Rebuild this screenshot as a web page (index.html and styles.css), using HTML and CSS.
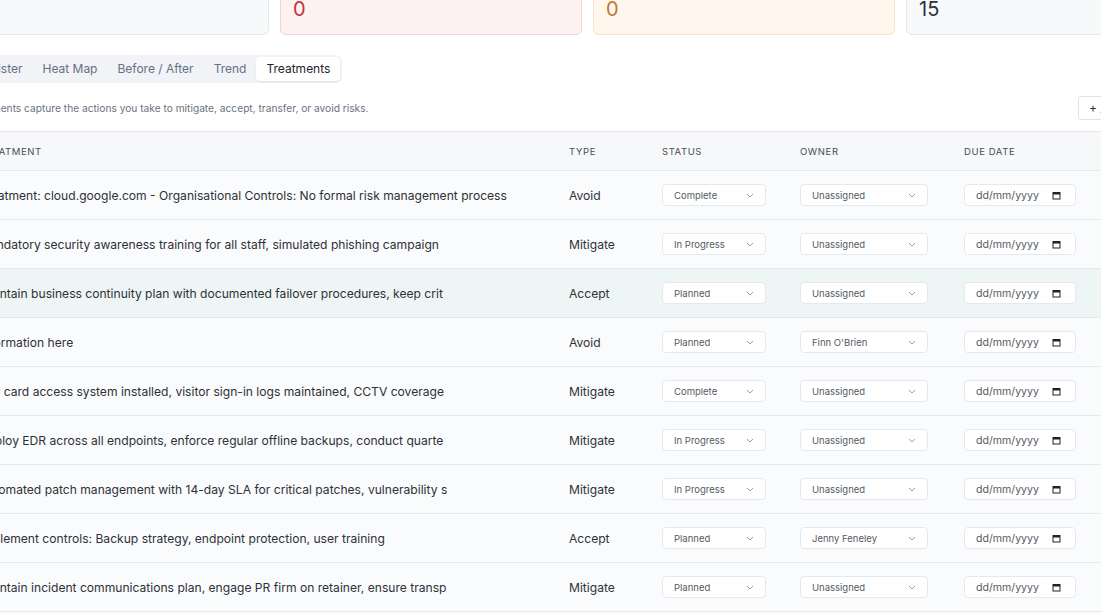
FILE: index.html
```html
<!DOCTYPE html>
<html>

	<head>
		<meta charset="UTF-8">
		<title>Risk Treatments</title>
		<link rel="stylesheet" href="styles.css">
	</head>

	<body>
		<div class="page">
			<div class="cards">
				<div class="card">
					<div class="card-label">Total Risks</div>
					<div class="card-value">0</div>
				</div>
				<div class="card card-red">
					<div class="card-label">Critical</div>
					<div class="card-value">0</div>
				</div>
				<div class="card card-orange">
					<div class="card-label">High</div>
					<div class="card-value">0</div>
				</div>
				<div class="card">
					<div class="card-label">Treatments</div>
					<div class="card-value">15</div>
				</div>
			</div>

			<div class="tabs">
				<div class="tab">Register</div>
				<div class="tab">Heat Map</div>
				<div class="tab">Before / After</div>
				<div class="tab">Trend</div>
				<div class="tab active">Treatments</div>
			</div>

			<div class="toolbar">
				<p class="hint">Treatments capture the actions you take to mitigate, accept, transfer, or avoid risks.</p>
				<button class="add-btn">+ Add Treatment</button>
			</div>

			<table class="grid">
				<thead>
					<tr>
						<th class="c-treat">Treatment</th>
						<th class="c-type">Type</th>
						<th class="c-status">Status</th>
						<th class="c-owner">Owner</th>
						<th class="c-due">Due Date</th>
						<th class="c-act"></th>
					</tr>
				</thead>
				<tbody id="rows"></tbody>
			</table>
		</div>

		<script type="text/javascript">
			var data = [
				['Treatment: cloud.google.com - Organisational Controls: No formal risk management process', 'Avoid', 'Complete', 'Unassigned'],
				['Mandatory security awareness training for all staff, simulated phishing campaign', 'Mitigate', 'In Progress', 'Unassigned'],
				['Maintain business continuity plan with documented failover procedures, keep crit', 'Accept', 'Planned', 'Unassigned'],
				['Information here', 'Avoid', 'Planned', 'Finn O\'Brien'],
				['Key card access system installed, visitor sign-in logs maintained, CCTV coverage', 'Mitigate', 'Complete', 'Unassigned'],
				['Deploy EDR across all endpoints, enforce regular offline backups, conduct quarte', 'Mitigate', 'In Progress', 'Unassigned'],
				['Automated patch management with 14-day SLA for critical patches, vulnerability s', 'Mitigate', 'In Progress', 'Unassigned'],
				['Implement controls: Backup strategy, endpoint protection, user training', 'Accept', 'Planned', 'Jenny Feneley'],
				['Maintain incident communications plan, engage PR firm on retainer, ensure transp', 'Mitigate', 'Planned', 'Unassigned'],
				['Review supplier contracts for security clauses', 'Transfer', 'Planned', 'Unassigned']
			];

			var chevron = '<svg class="chev" width="8" height="5" viewBox="0 0 8 5"><path d="M1 1l3 3 3-3" fill="none" stroke="#9aa0a6" stroke-width="1"/></svg>';
			var cal = '<svg class="cal" width="9" height="9" viewBox="0 0 9 9"><rect x="1" y="1.5" width="7" height="6.5" fill="none" stroke="#222" stroke-width="1"/><rect x="1" y="1.5" width="7" height="2" fill="#222"/></svg>';

			function init() {
				var tbody = document.getElementById('rows');
				var html = '';
				for(var i = 0; i < data.length; i++) {
					var r = data[i];
					html += '<tr' + (i === 2 ? ' class="hover"' : '') + '>' +
						'<td class="c-treat">' + r[0] + '</td>' +
						'<td class="c-type">' + r[1] + '</td>' +
						'<td><div class="sel sel-status"><span>' + r[2] + '</span>' + chevron + '</div></td>' +
						'<td><div class="sel sel-owner"><span>' + r[3] + '</span>' + chevron + '</div></td>' +
						'<td><div class="date"><span>dd/mm/yyyy</span>' + cal + '</div></td>' +
						'<td></td>' +
						'</tr>';
				}
				tbody.innerHTML = html;
			}
			init();
		</script>
	</body>

</html>
```

FILE: styles.css
```css
html,
body {
	margin: 0;
	overflow: hidden;
	background: #fff;
}

body {
	font-family: "Inter", "Noto Sans", sans-serif;
	color: #2d3138;
}

.page {
	width: 1241px;
	margin: -50px 0 0 -33px;
}

.cards {
	display: grid;
	grid-template-columns: repeat(4, 1fr);
	gap: 11px;
}

.card {
	height: 85px;
	box-sizing: border-box;
	padding: 12px 12px 11px;
	background: #f8f9fb;
	border: 1px solid #e6e8eb;
	border-radius: 6px;
	display: flex;
	flex-direction: column;
	justify-content: flex-end;
}

.card-label {
	font-size: 11px;
	color: #6b7280;
	margin-bottom: 4px;
}

.card-value {
	font-size: 20px;
	line-height: 28px;
	color: #2d3138;
}

.card-red {
	background: #fef1f1;
	border-color: #f8cfcf;
}

.card-red .card-value {
	color: #b83a3a;
}

.card-orange {
	background: #fff6ee;
	border-color: #fbe3cc;
}

.card-orange .card-value {
	color: #c07a2c;
}

.tabs {
	display: inline-flex;
	margin: 20px 0 0 -3px;
	padding: 2px;
	background: #f1f3f6;
	border-radius: 6px;
}

.tab {
	padding: 0 10px;
	height: 24px;
	line-height: 24px;
	font-size: 12px;
	color: #667085;
	border-radius: 4px;
}

.tab.active {
	background: #fff;
	color: #1f2430;
	box-shadow: 0 1px 2px rgba(0, 0, 0, 0.08);
}

.toolbar {
	display: flex;
	justify-content: space-between;
	align-items: center;
	margin-top: 13px;
	height: 24px;
}

.hint {
	margin: 0;
	font-size: 10.2px;
	color: #6b7280;
}

.add-btn {
	height: 24px;
	min-width: 130px;
	padding: 0 10px;
	background: #fff;
	border: 1px solid #dfe2e6;
	border-radius: 4px;
	font-family: inherit;
	font-size: 12px;
	color: #2d3138;
	text-align: left;
}

.grid {
	width: 100%;
	margin-top: 11px;
	border-collapse: collapse;
	background: #fafbfc;
	table-layout: fixed;
}

.grid th {
	height: 38px;
	padding: 0 12px;
	text-align: left;
	font-size: 9.5px;
	font-weight: 400;
	letter-spacing: 0.6px;
	text-transform: uppercase;
	color: #474c55;
	background: #f7f8fa;
	border-top: 1px solid #e6e8eb;
	border-bottom: 1px solid #e6e8eb;
}

.grid td {
	height: 48px;
	padding: 0 12px;
	font-size: 12.1px;
	color: #2d3138;
	border-bottom: 1px solid #e6e8eb;
	white-space: nowrap;
	overflow: hidden;
}

.grid tr.hover td {
	background: #eef5f5;
}

.c-treat {
	width: 566px;
}

.c-type {
	width: 69px;
}

.c-status {
	width: 114px;
}

.c-owner {
	width: 140px;
}

.c-due {
	width: 130px;
}

.sel,
.date {
	display: flex;
	align-items: center;
	justify-content: space-between;
	box-sizing: border-box;
	height: 22px;
	padding: 0 11px;
	background: #fff;
	border: 1px solid #e6e8eb;
	border-radius: 4px;
	font-size: 9.5px;
	color: #555a62;
}

.sel-status {
	width: 104px;
}

.sel-owner {
	width: 128px;
}

.date {
	width: 112px;
	font-size: 10.6px;
	padding-right: 14px;
}
```
